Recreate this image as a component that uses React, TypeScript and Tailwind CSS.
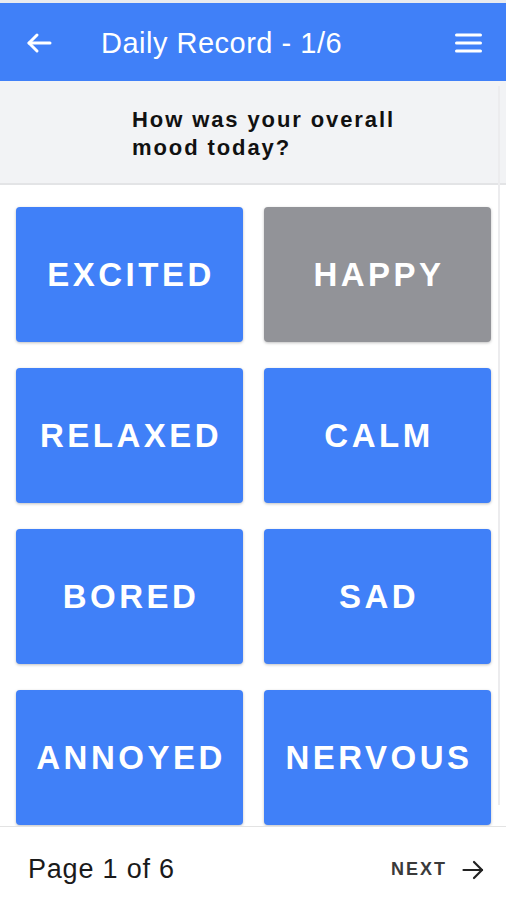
import React from "react";

const moods = [
  { label: "EXCITED", active: true },
  { label: "HAPPY", active: false },
  { label: "RELAXED", active: true },
  { label: "CALM", active: true },
  { label: "BORED", active: true },
  { label: "SAD", active: true },
  { label: "ANNOYED", active: true },
  { label: "NERVOUS", active: true },
];

export default function App() {
  return (
    <div
      className="relative w-[506px] h-[900px] flex flex-col bg-white overflow-hidden"
      style={{ fontFamily: '"Liberation Sans", Arial, sans-serif' }}
    >
      <div className="h-[3px] bg-[#e9ebef] shrink-0" />
      <header className="h-[78px] shrink-0 bg-[#4080f8] flex items-center text-white">
        <div className="w-[101px] flex items-center pl-[26px] pt-[2px]">
          <svg width="26" height="22" viewBox="0 0 26 22" fill="none" stroke="white" strokeWidth="3" strokeLinecap="round" strokeLinejoin="round">
            <path d="M24 11H3" />
            <path d="M11 3L3 11L11 19" />
          </svg>
        </div>
        <div className="flex-1 text-[29px] tracking-[0.5px] leading-none pt-[2px]">Daily Record - 1/6</div>
        <div className="pr-[24px] flex items-center pt-[2px]">
          <svg width="27" height="22" viewBox="0 0 27 22" fill="none" stroke="white" strokeWidth="3" strokeLinecap="round">
            <path d="M1.5 3H25.5" />
            <path d="M1.5 11H25.5" />
            <path d="M1.5 19H25.5" />
          </svg>
        </div>
      </header>
      <div className="h-[104px] shrink-0 bg-[#f2f3f5] border-b-2 border-[#e3e4e6] flex items-center pl-[132px]">
        <p className="w-[320px] text-[22px] font-bold tracking-[1.9px] leading-[28px] text-[#111] pt-[4px]">
          How was your overall mood today?
        </p>
      </div>
      <div className="flex-1 overflow-hidden pt-[22px] pl-[16px] pr-[15px]">
        <div className="grid grid-cols-2 gap-x-[21px] gap-y-[26px]">
          {moods.map((m) => (
            <div
              key={m.label}
              className={
                "h-[135px] rounded-[4px] flex items-center justify-center text-white text-[33px] font-bold tracking-[3.5px] shadow-[0_1px_3px_rgba(0,0,0,0.25)] " +
                (m.active ? "bg-[#4080f8]" : "bg-[#929398]")
              }
            >
              <span className="pl-[3px]">{m.label}</span>
            </div>
          ))}
        </div>
      </div>
      <footer className="h-[74px] shrink-0 border-t border-[#e3e3e3] bg-white flex items-center justify-between pl-[28px] pr-[22px] pt-[12px]">
        <span className="text-[27px] tracking-[0.8px] text-[#1a1a1a]">Page 1 of 6</span>
        <div className="flex items-center gap-[15px]">
          <span className="text-[18px] tracking-[2px] font-bold text-[#3a3a3a]">NEXT</span>
          <svg width="22" height="20" viewBox="0 0 22 20" fill="none" stroke="#222" strokeWidth="2.2" strokeLinecap="round" strokeLinejoin="round">
            <path d="M1.5 10H20" />
            <path d="M12 2L20 10L12 18" />
          </svg>
        </div>
      </footer>
      <div className="absolute left-[498px] top-[86px] w-[2px] h-[719px] bg-[#ececee]" />
    </div>
  );
}
